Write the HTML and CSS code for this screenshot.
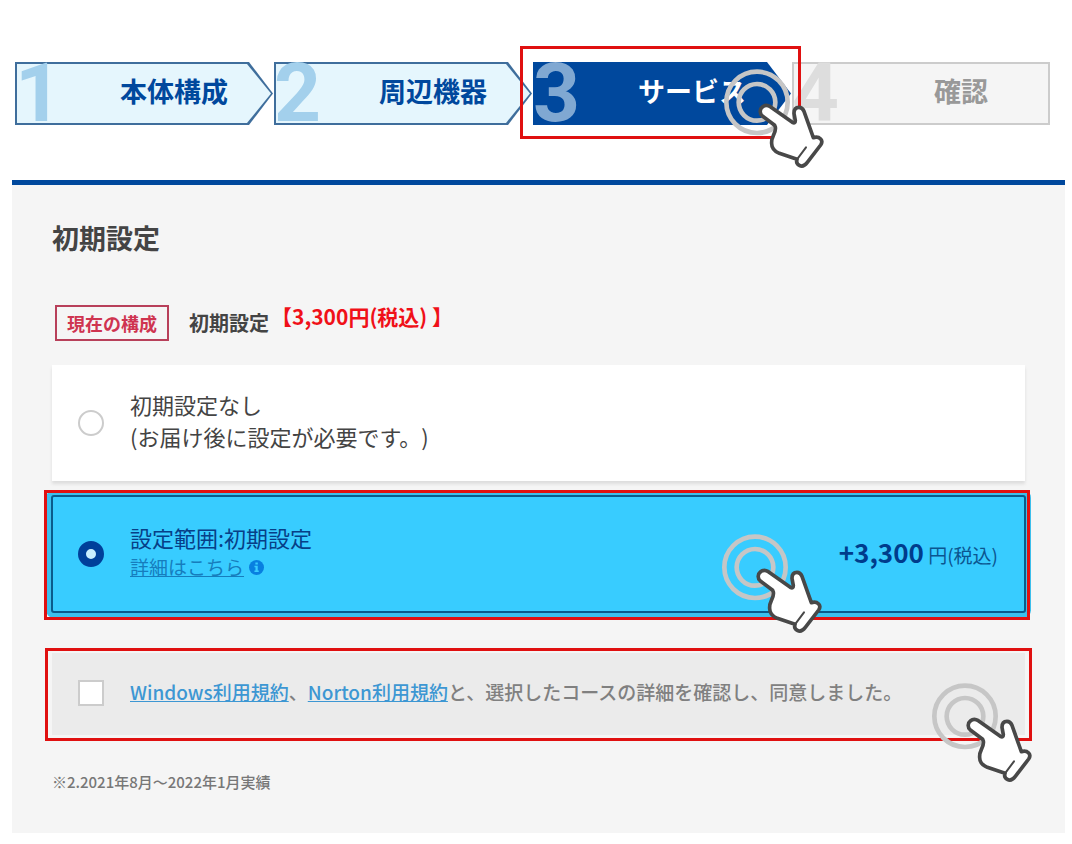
FILE: index.html
```html
<!DOCTYPE html>
<html lang="ja">
<head>
  <meta charset="UTF-8" />
  <meta name="viewport" content="width=device-width, initial-scale=1.0"/>
  <title>サービス | 初期設定</title>
  <link rel="stylesheet" href="styles.css">
</head>
<body>

<!-- Shared tap marker: two rings and a pointing hand -->
<svg class="defs" width="0" height="0" aria-hidden="true">
  <symbol id="tap" viewBox="0 0 300 300">
    <g fill="none" stroke="#c6c6c6" stroke-width="14">
      <circle cx="99" cy="100" r="92"/>
      <circle cx="99" cy="100" r="55"/>
    </g>
    <path fill="#fff" stroke="#484848" stroke-width="11" stroke-linejoin="round" d="M115 141C106 133 107 120 115 114C122 108 131 108 139 113L205 160Q214 165 214 155L210 133C210 120 217 115 225 115C232 115 237 120 240 127L268 206Q281 201 290 210Q297 218 290 228L250 280Q238 296 226 289Q215 283 219 271L166 253Q143 243 143 224Q142 212 148 200Q156 184 154 174L152 169Z"/>
    <path fill="none" stroke="#484848" stroke-width="6" stroke-linecap="round" d="M219 271L246 235"/>
  </symbol>
</svg>

<main class="page">

  <ol class="steps">
    <li class="step"><a class="step-link" href="#"><span class="step-number">1</span><span class="step-label">本体構成</span></a></li>
    <li class="step"><a class="step-link" href="#"><span class="step-number">2</span><span class="step-label">周辺機器</span></a></li>
    <li class="step current marked">
      <a class="step-link" href="#" aria-current="step"><span class="step-number">3</span><span class="step-label">サービス</span></a>
      <svg class="tap" aria-hidden="true"><use href="#tap"/></svg>
    </li>
    <li class="step last"><a class="step-link" href="#"><span class="step-number">4</span><span class="step-label">確認</span></a></li>
  </ol>

  <section class="panel">
    <h1 class="panel-title">初期設定</h1>

    <div class="selected">
      <span class="selected-badge">現在の構成</span>
      <span class="selected-name">初期設定</span>
      <span class="selected-price">【3,300円(税込) 】</span>
    </div>

    <form>
      <div class="option">
        <input class="radio" type="radio" name="setup" id="setup-none">
        <div class="option-text">
          <label class="option-name" for="setup-none">初期設定なし<br>(お届け後に設定が必要です。)</label>
        </div>
      </div>

      <div class="option checked marked">
        <input class="radio" type="radio" name="setup" id="setup-basic" checked>
        <div class="option-text">
          <label class="option-name" for="setup-basic">設定範囲:初期設定</label>
          <div class="option-detail">
            <a href="#">詳細はこちら</a>
            <svg class="info" viewBox="0 0 16 16" aria-hidden="true">
              <circle cx="8" cy="8" r="8" fill="#087fe0"/>
              <path fill="#38ccff" d="M6.8 2.6h2.6v2.2H6.8zM5.8 6.2h3.5v5h1.1v1.6H5.8v-1.6h1.1V7.8H5.8z"/>
            </svg>
          </div>
        </div>
        <p class="price"><strong>+3,300</strong> 円(税込)</p>
        <svg class="tap" aria-hidden="true"><use href="#tap"/></svg>
      </div>

      <div class="agree marked">
        <input class="checkbox" type="checkbox" id="agree">
        <label class="agree-text" for="agree"><a href="#">Windows利用規約</a>、<a href="#">Norton利用規約</a>と、選択したコースの詳細を確認し、同意しました。</label>
        <svg class="tap" aria-hidden="true"><use href="#tap"/></svg>
      </div>
    </form>

    <p class="note">※2.2021年8月～2022年1月実績</p>
  </section>

</main>

</body>
</html>
```
FILE: styles.css
```css
:root {
  --navy: #00489d;
  --line: #3f6e9c;
  --red: #e01010;
  --cyan: #38ccff;
}

* {
  box-sizing: border-box;
}

body {
  margin: 0;
  background: #fff;
  color: #444;
  font-family: "Noto Sans CJK JP", sans-serif;
  text-spacing-trim: space-all;
}

p, h1, ol {
  margin: 0;
  padding: 0;
}

.defs {
  position: absolute;
}

.page {
  padding: 62px 7px 11px 12px;
}

/* Red frame and tap marker */
.marked {
  position: relative;
}

.marked::after {
  content: "";
  position: absolute;
  border: 3px solid var(--red);
  pointer-events: none;
}

.tap {
  position: absolute;
  z-index: 2;
  width: 100px;
  height: 100px;
  pointer-events: none;
}

/* Steps */
.steps {
  display: grid;
  grid-template-columns: repeat(4, 1fr);
  gap: 1px;
  margin: 0 15px 55px 3px;
  list-style: none;
}

.step-link {
  --arrow: polygon(0 0, calc(100% - 24px) 0, 100% 50%, calc(100% - 24px) 100%, 0 100%);
  display: flex;
  align-items: center;
  position: relative;
  z-index: 0;
  height: 63px;
  background: var(--line);
  clip-path: var(--arrow);
  color: var(--navy);
  font-size: 27px;
  font-weight: bold;
  line-height: 63px;
  text-decoration: none;
}

.step-link::before {
  content: "";
  position: absolute;
  z-index: -1;
  inset: 2px;
  background: #e5f6fd;
  clip-path: var(--arrow);
}

.step-number {
  width: 60px;
  color: #a3d0ec;
  font-family: Roboto, sans-serif;
  font-size: 82px;
}

.step-label {
  flex: 1;
  padding-bottom: 6px;
  line-height: 57px;
  text-align: center;
}

.current {
  z-index: 1;
}

.current .step-link,
.current .step-link::before {
  background: var(--navy);
  color: #fff;
}

.current .step-number {
  color: #80a8d2;
}

.last .step-link {
  --arrow: none;
  background: #ccc;
  color: #999;
}

.last .step-link::before {
  background: #f5f5f5;
}

.last .step-number {
  width: 80px;
  color: #ddd;
}

.current::after {
  inset: -16px -10px -14px -13px;
}

.current .tap {
  top: 7px;
  right: -33px;
}

/* Panel */
.panel {
  padding: 35px 40px 38px;
  border-top: 5px solid var(--navy);
  background: #f5f5f5;
}

.panel-title {
  margin-bottom: 49px;
  font-size: 27px;
  line-height: 36px;
}

.selected {
  display: flex;
  align-items: flex-start;
  margin: 0 0 24px 3px;
  font-size: 20px;
  font-weight: bold;
  line-height: 36px;
}

.selected-badge {
  margin-right: 20px;
  padding: 0 10px;
  border: 2px solid #b8405a;
  color: #cf3450;
  font-size: 18px;
  line-height: 32px;
}

.selected-price {
  margin-left: 2px;
  color: #f01018;
  font-size: 21px;
  line-height: 22px;
}

/* Options */
.option {
  display: flex;
  align-items: center;
  min-height: 116px;
  margin-bottom: 14px;
  padding: 0 26px;
  background: #fff;
  box-shadow: 0 3px 3px #ddd;
}

.radio,
.checkbox {
  flex: none;
  appearance: none;
  width: 26px;
  height: 26px;
  margin: 0 26px 0 0;
  border: 2px solid #ccc;
  background: #fff;
}

.radio {
  border-radius: 50%;
}

.radio:checked {
  border: 8px solid #00409a;
  background: #c9eeff;
}

.option-name {
  font-size: 22px;
  line-height: 32px;
}

.option-text {
  flex: 1;
  padding-bottom: 6px;
}

.option.checked {
  min-height: 118px;
  margin: 0 -1px 40px;
  padding: 0 26px 0 25px;
  border: 2px solid #0a5b8c;
  border-radius: 3px;
  background: var(--cyan);
  box-shadow: 0 0 0 5px #3cbfec;
  color: #073f87;
}

.option.checked::after {
  inset: -7px -6px -9px -9px;
}

.option.checked .tap {
  top: 37px;
  right: 202px;
}

.option-detail {
  display: flex;
  align-items: center;
  gap: 5px;
  font-size: 19px;
  line-height: 28px;
}

.option-detail a {
  color: #167dbd;
}

.info {
  width: 15px;
  height: 15px;
}

.price {
  padding-bottom: 6px;
  color: #0b5590;
  font-size: 19px;
}

.price strong {
  color: #003c8c;
  font-size: 26px;
}

/* Agreement */
.agree {
  display: flex;
  align-items: center;
  min-height: 82px;
  margin-bottom: 35px;
  padding: 0 26px 2px;
  background: #ebebeb;
  color: #808080;
  font-size: 19px;
  font-weight: 500;
}

.agree-text {
  padding-bottom: 4px;
}

.agree a {
  color: #3d97d3;
}

.agree::after {
  inset: -5px -7px -6px -7px;
}

.agree .tap {
  top: 30px;
  right: -7px;
}

.note {
  margin-bottom: 1px;
  color: #777;
  font-size: 15px;
  font-weight: 500;
  line-height: 24px;
}
```
